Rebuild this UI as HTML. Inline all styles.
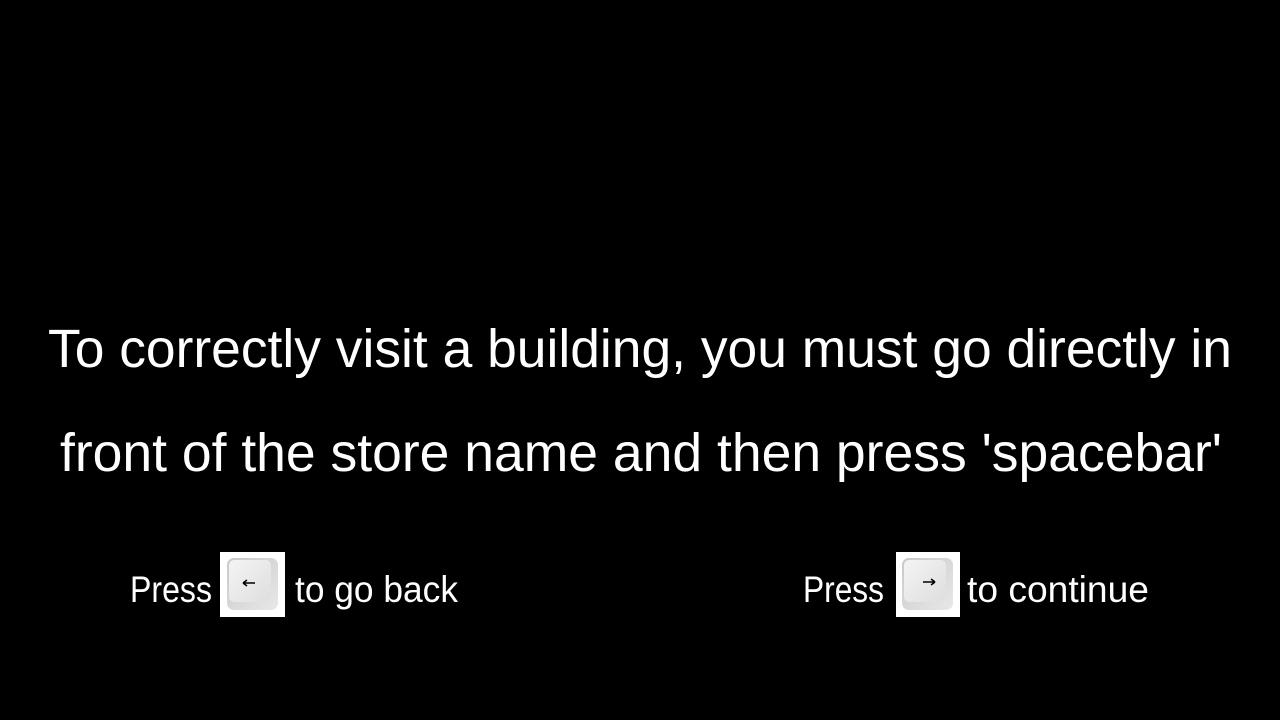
<!DOCTYPE html>
<html><head><style>
html,body{margin:0;padding:0;background:#000;width:1280px;height:720px;overflow:hidden}
</style></head><body>
<svg width="1280" height="720" xmlns="http://www.w3.org/2000/svg" style="display:block">
<defs>
<linearGradient id="g" x1="0" y1="0" x2="1" y2="1">
<stop offset="0" stop-color="#c8c8c8"/><stop offset="1" stop-color="#e8e8e8"/></linearGradient>
<linearGradient id="f" x1="0" y1="0" x2="1" y2="1">
<stop offset="0" stop-color="#f4f4f4"/><stop offset="1" stop-color="#dedede"/></linearGradient>
</defs>
<rect width="1280" height="720" fill="#000"/>
<g fill="#fff" font-family="Liberation Sans, sans-serif" font-weight="normal">
<text x="48" y="367" font-size="54" textLength="1184" lengthAdjust="spacingAndGlyphs">To correctly visit a building, you must go directly in</text>
<text x="60" y="471" font-size="54" textLength="1162" lengthAdjust="spacingAndGlyphs">front of the store name and then press 'spacebar'</text>
<text x="130" y="602" font-size="37" textLength="82" lengthAdjust="spacingAndGlyphs">Press</text>
<text x="295" y="602" font-size="37" textLength="163" lengthAdjust="spacingAndGlyphs">to go back</text>
<text x="803" y="602" font-size="37" textLength="81" lengthAdjust="spacingAndGlyphs">Press</text>
<text x="967" y="602" font-size="37" textLength="182" lengthAdjust="spacingAndGlyphs">to continue</text>
</g>
<g>
<rect x="220" y="552" width="65" height="65" fill="#fff"/>
<rect x="227" y="558" width="51" height="52" rx="7" fill="url(#g)"/>
<rect x="229" y="560" width="42" height="42" rx="5" fill="url(#f)"/>
<path d="M243 583h12M243 583l4-3M243 583l4 3" stroke="#000" stroke-width="1.5" fill="none"/>
<rect x="896" y="552" width="64" height="65" fill="#fff"/>
<rect x="902" y="558" width="51" height="52" rx="7" fill="url(#g)"/>
<rect x="904" y="560" width="42" height="42" rx="5" fill="url(#f)"/>
<path d="M923 582h12M935 582l-4-3M935 582l-4 3" stroke="#000" stroke-width="1.5" fill="none"/>
</g>
</svg>
</body></html>
